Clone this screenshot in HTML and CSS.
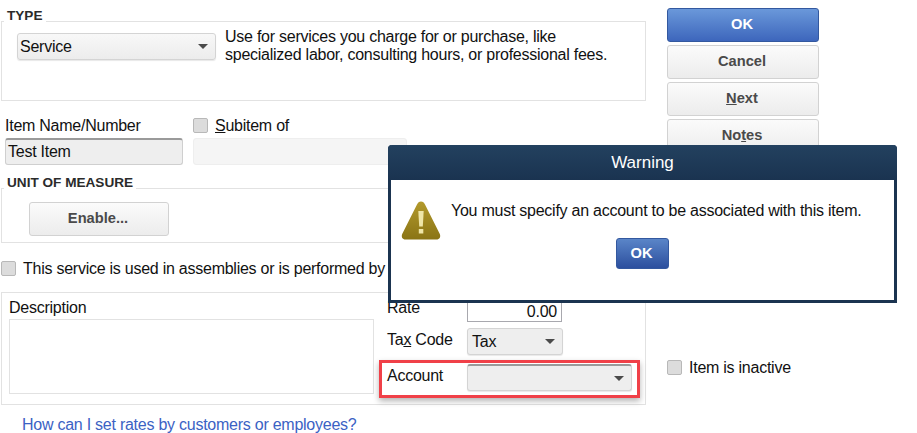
FILE: index.html
```html
<!DOCTYPE html>
<html lang="en">
<head>
<meta charset="utf-8">
<title>New Item</title>
<link rel="stylesheet" href="styles.css">
</head>
<body>
<div class="page">
  <div class="form">
    <fieldset class="group type-group">
      <legend>TYPE</legend>
      <div class="type-row">
        <div class="select type-select"><span>Service</span><i class="arrow"></i></div>
        <p class="type-help">Use for services you charge for or purchase, like<br>specialized labor, consulting hours, or professional fees.</p>
      </div>
    </fieldset>
    <div class="name-row">
      <div class="name-col">
        <label class="label">Item Name/Number</label>
        <div class="input name-input">Test Item</div>
      </div>
      <div class="sub-col">
        <div class="check-line"><i class="check"></i><span><u>S</u>ubitem of</span></div>
        <div class="input sub-input"></div>
      </div>
    </div>
    <fieldset class="group unit-group">
      <legend>UNIT OF MEASURE</legend>
      <button class="btn enable-btn">Enable...</button>
    </fieldset>
    <div class="check-line assembly"><i class="check"></i><span>This service is used in assemblies or is performed by a subcontractor or partner</span></div>
    <section class="details">
      <div class="desc-col">
        <div class="label">Description</div>
        <div class="textarea"></div>
      </div>
      <div class="fields">
        <div class="field rate-field"><span class="label">Rate</span><div class="rate-input">0.00</div></div>
        <div class="field tax-field"><span class="label">Ta<u>x</u> Code</span><div class="select tax-select"><span>Tax</span><i class="arrow"></i></div></div>
        <div class="field account-field"><span class="label">Account</span><div class="select account-select"><i class="arrow"></i></div></div>
      </div>
    </section>
    <a class="help-link" href="#">How can I set rates by customers or employees?</a>
  </div>
  <aside class="actions">
    <button class="btn primary">OK</button>
    <button class="btn">Cancel</button>
    <button class="btn"><u>N</u>ext</button>
    <button class="btn">No<u>t</u>es</button>
    <div class="check-line inactive"><i class="check"></i><span>Item is inactive</span></div>
  </aside>
</div>
<div class="modal" role="dialog">
  <header class="modal-title">Warning</header>
  <div class="modal-body">
    <div class="modal-message">
      <svg class="warn-icon" width="40" height="40" viewBox="0 0 40 40" aria-hidden="true">
        <defs>
          <linearGradient id="gold" x1="0" y1="0" x2="0" y2="1">
            <stop offset="0" stop-color="#b39a2c"/>
            <stop offset="1" stop-color="#8a7415"/>
          </linearGradient>
        </defs>
        <path d="M20 1.500C22 1.500 23 2.500 24 4.500L38.800 34C40 37 38.500 39.500 35.500 39.500H4.500C1.500 39.500 0 37 1.200 34L16 4.500C17 2.500 18 1.500 20 1.500Z" fill="url(#gold)"/>
        <path d="M17.300 11H22.700L21.800 26.500H18.200Z" fill="#efe6a8"/>
        <rect x="17.800" y="29" width="4.500" height="4.500" fill="#efe6a8"/>
      </svg>
      <p>You must specify an account to be associated with this item.</p>
    </div>
    <button class="btn primary modal-ok">OK</button>
  </div>
</div>
</body>
</html>
```
FILE: styles.css
```css
* { box-sizing: border-box; }
html, body { margin: 0; padding: 0; }
body {
  width: 917px;
  height: 433px;
  overflow: hidden;
  background: #fff;
  color: #111;
  font-family: "Liberation Sans", Arial, sans-serif;
  font-size: 16px;
  letter-spacing: -0.25px;
  position: relative;
}
.page {
  display: grid;
  grid-template-columns: 646px 152px;
  column-gap: 21px;
  align-items: start;
}
.form { padding-left: 1px; padding-top: 10px; }
.group {
  margin: 0;
  border: 1px solid #e2e2e2;
  min-width: 0;
  padding: 0 2px;
}
.group legend {
  font-size: 13.6px;
  font-weight: 700;
  letter-spacing: 0;
  color: #2b2b2b;
  line-height: 12px;
  padding: 0 3px 10px;
}
.type-group { height: 91px; padding-top: 1px; }
.type-row { display: flex; gap: 9px; margin-left: 13px; }
.select {
  display: flex;
  align-items: center;
  justify-content: space-between;
  border: 1px solid #d4d4d4;
  border-radius: 3px;
  background: linear-gradient(#f8f8f8, #ececec);
  padding: 0 7px 0 2px;
  box-shadow: 0 1px 1px #e8e8e8;
}
.type-select { width: 199px; height: 27px; flex: none; }
.arrow {
  width: 0;
  height: 0;
  border-left: 5px solid transparent;
  border-right: 5px solid transparent;
  border-top: 5px solid #4a4a4a;
}
.type-help { margin: -5px 0 0; line-height: 18px; }
.name-row { display: flex; margin-top: 16px; padding-left: 4px; gap: 10px; }
.name-col { width: 178px; }
.name-col .label { display: block; line-height: 17px; }
.label { white-space: nowrap; }
.input {
  height: 27px;
  margin-top: 4px;
  border-radius: 3px;
  line-height: 26px;
}
.name-input {
  background: #eeeeee;
  border: 1px solid #cfcfcf;
  border-top: 2px solid #9a9a9a;
  padding-left: 2px;
  line-height: 23px;
}
.sub-input { width: 214px; background: #f5f5f5; border: 1px solid #eeeeee; }
.check-line { display: flex; align-items: center; gap: 7px; line-height: 17px; white-space: nowrap; }
.check {
  display: block;
  width: 15px;
  height: 15px;
  flex: none;
  background: #dcdcdc;
  border: 1px solid #b8b8b8;
  border-radius: 2px;
}
.unit-group { height: 66px; margin-top: 12px; padding-top: 3px; }
.btn {
  display: block;
  font-family: inherit;
  font-size: 14.67px;
  font-weight: 700;
  letter-spacing: 0;
  color: #4a4a4a;
  background: linear-gradient(#fbfbfb, #ececec);
  border: 1px solid #d2d2d2;
  border-radius: 3px;
  padding: 0 2px 2px 0;
  width: 152px;
  height: 34px;
}
.enable-btn { width: 140px; margin-left: 25px; }
.assembly { margin-top: 17px; }
.details {
  display: flex;
  height: 113px;
  margin-top: 15px;
  border: 1px solid #e2e2e2;
  padding: 6px 0 0 7px;
}
.desc-col { width: 365px; flex: none; }
.desc-col .label { line-height: 17px; }
.textarea { height: 75px; margin-top: 3px; border: 1px solid #e2e2e2; }
.fields { margin-left: 13px; display: flex; flex-direction: column; }
.field { display: flex; align-items: flex-start; }
.field .label { width: 80px; line-height: 17px; flex: none; }
.rate-field { height: 27px; }
.rate-input {
  width: 95px;
  height: 24px;
  margin-top: -1px;
  border: 1px solid #a8a8ae;
  text-align: right;
  padding-right: 4px;
  line-height: 25px;
}
.tax-field { margin-top: 2px; height: 27px; }
.tax-field .label { margin-top: 3px; }
.tax-select { width: 96px; height: 27px; background: #eeeeee; padding-left: 4px; }
.account-field {
  margin: 5px 0 0 -8px;
  width: 261px;
  height: 38px;
  border: 3px solid #f04048;
  box-shadow: 0 3px 6px rgba(0, 0, 0, .3);
  padding-left: 5px;
}
.account-field .label { margin-top: 4px; }
.account-select {
  width: 165px;
  height: 27px;
  margin-top: 1px;
  justify-content: flex-end;
  background: #eeeeee;
  border-top: 2px solid #9a9a9a;
}
.help-link {
  display: block;
  margin: 11px 0 0 21px;
  color: #3b62c4;
  text-decoration: none;
  line-height: 17px;
}
.actions { display: flex; flex-direction: column; padding-top: 8px; gap: 3px; }
.btn.primary {
  background: linear-gradient(#6a98da, #3d66bc);
  border: 1px solid #33589f;
  color: #fff;
}
.inactive { margin-top: 203px; }
.modal {
  position: absolute;
  left: 388px;
  top: 145px;
  width: 509px;
  height: 158px;
  display: flex;
  flex-direction: column;
  border: 3px solid #1b3450;
  border-top: 0;
  border-radius: 4px 4px 0 0;
  background: #fff;
}
.modal-title {
  margin: 0 -3px;
  height: 35px;
  background: linear-gradient(#23415f, #1a3350);
  color: #fff;
  border-radius: 4px 4px 0 0;
  text-align: center;
  line-height: 36px;
  font-size: 17px;
  letter-spacing: 0;
}
.modal-body { display: flex; flex-direction: column; flex: 1; }
.modal-message { display: flex; align-items: flex-start; padding: 20px 0 0 10px; gap: 10px; }
.modal-message p { margin: 2px 0 0; white-space: nowrap; }
.warn-icon { flex: none; }
.btn.modal-ok {
  width: 53px;
  height: 31px;
  margin: -2px 0 0 225px;
  background: linear-gradient(#5a85c8, #2c4f9e);
}
```
